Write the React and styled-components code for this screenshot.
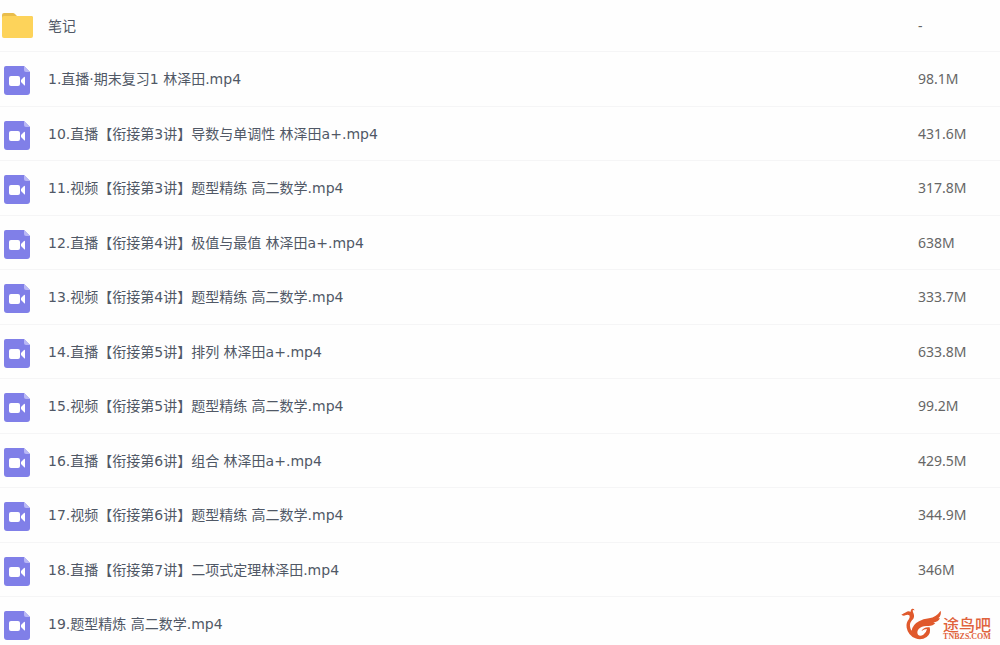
import React from "react";
import styled, { createGlobalStyle } from "styled-components";

const GlobalStyle = createGlobalStyle`
    body {
        margin: 0;
        background-color: #fefefe;
    }
`;

const Page = styled.main`
    position: relative;
    height: 100vh;
    overflow: hidden;
`;

const FileTable = styled.table`
    width: 100%;
    table-layout: fixed;
    border-collapse: separate;
    border-spacing: 0;
    font-family: 'DejaVu Sans', 'Noto Sans CJK SC', sans-serif;
    font-size: 14px;
    line-height: 20px;
    color: #505866;
`;

const FileRow = styled.tr`
    height: 54px;
    &:nth-child(even) {
        height: 55px;
    }
    &:first-child {
        height: 52px;
    }
`;

const IconCell = styled.td`
    width: 48px;
    padding: 0;
    box-sizing: border-box;
    border-bottom: 1px solid #f5f5f6;
    svg {
        display: block;
    }
`;

const NameCell = styled.td`
    padding: 0;
    border-bottom: 1px solid #f5f5f6;
    white-space: nowrap;
`;

const SizeCell = styled.td`
    width: 82px;
    padding: 0;
    border-bottom: 1px solid #f5f5f6;
    font-family: 'Noto Sans', sans-serif;
    color: #666;
`;

const Watermark = styled.div`
    position: absolute;
    right: 9px;
    bottom: 3px;
    display: flex;
    align-items: flex-end;
    color: #e0623c;
`;

const Brand = styled.div`
    display: flex;
    flex-direction: column;
    align-items: center;
`;

const BrandName = styled.span`
    font-family: 'Noto Sans CJK SC', sans-serif;
    font-size: 16px;
    font-weight: 500;
    line-height: 16px;
`;

const BrandSite = styled.span`
    font-family: 'Liberation Serif', serif;
    font-weight: bold;
    font-size: 8px;
    line-height: 10px;
`;

const FolderIcon = () => (
    <svg width="36" height="28" viewBox="0 0 36 28" aria-hidden="true">
        <path d="M2 3q0-2 2-2h9q1 0 2 1l2 2h14q2 0 2 2v6H2z" fill="#e9bd4c" />
        <rect x="2" y="4" width="31" height="22" rx="2" fill="#fdd35a" />
    </svg>
);

const VideoIcon = () => (
    <svg width="36" height="32" viewBox="0 0 36 32" aria-hidden="true">
        <path d="M6 3h18l6 6v20q0 3-3 3H7q-3 0-3-3V5q0-2 2-2z" fill="#807fe8" />
        <path d="M24 3l6 6h-4q-2 0-2-2z" fill="#b9b8f5" />
        <rect x="9" y="13" width="11" height="10" rx="2" fill="#fff" />
        <path d="M21 17l3-3q1-1 1 1v7q0 1-1 0l-3-3z" fill="#fff" />
    </svg>
);

const BirdLogo = () => (
    <svg width="42" height="36" viewBox="0 0 126 108" aria-hidden="true">
        <g fill="#e0592c">
            <path d="M1 26Q10 22 15 19Q21 13 29 17Q28 10 34 8Q41 7 40 14Q38 11 35 13Q35 18 38 23Q42 34 33 43Q24 53 28 66Q29 71 32 74Q35 56 54 46Q66 39 84 37Q106 33 119 14Q122 27 112 37Q117 37 117 37Q111 48 97 50Q101 52 103 51Q96 61 79 60Q62 59 53 69Q46 78 51 86Q57 92 67 86Q76 80 78 69Q69 69 61 76Q68 62 86 64Q91 83 77 93Q61 104 43 97Q21 87 17 65Q14 51 24 39Q28 33 25 28Q20 24 13 28Q8 31 1 26z" />
        </g>
    </svg>
);

const files = [
    { name: "笔记", size: "-", folder: true },
    { name: "1.直播·期末复习1 林泽田.mp4", size: "98.1M" },
    { name: "10.直播【衔接第3讲】导数与单调性 林泽田a+.mp4", size: "431.6M" },
    { name: "11.视频【衔接第3讲】题型精练 高二数学.mp4", size: "317.8M" },
    { name: "12.直播【衔接第4讲】极值与最值 林泽田a+.mp4", size: "638M" },
    { name: "13.视频【衔接第4讲】题型精练 高二数学.mp4", size: "333.7M" },
    { name: "14.直播【衔接第5讲】排列 林泽田a+.mp4", size: "633.8M" },
    { name: "15.视频【衔接第5讲】题型精练 高二数学.mp4", size: "99.2M" },
    { name: "16.直播【衔接第6讲】组合 林泽田a+.mp4", size: "429.5M" },
    { name: "17.视频【衔接第6讲】题型精练 高二数学.mp4", size: "344.9M" },
    { name: "18.直播【衔接第7讲】二项式定理林泽田.mp4", size: "346M" },
    { name: "19.题型精炼 高二数学.mp4", size: "" },
];

const App = () => {
    return (
        <Page lang="zh-CN">
            <GlobalStyle />
            <FileTable>
                <tbody>
                    {files.map(file => (
                        <FileRow key={file.name}>
                            <IconCell>{file.folder ? <FolderIcon /> : <VideoIcon />}</IconCell>
                            <NameCell>{file.name}</NameCell>
                            <SizeCell>{file.size}</SizeCell>
                        </FileRow>
                    ))}
                </tbody>
            </FileTable>
            <Watermark>
                <BirdLogo />
                <Brand>
                    <BrandName>途鸟吧</BrandName>
                    <BrandSite>TNBZS.COM</BrandSite>
                </Brand>
            </Watermark>
        </Page>
    )
}

export default App;
